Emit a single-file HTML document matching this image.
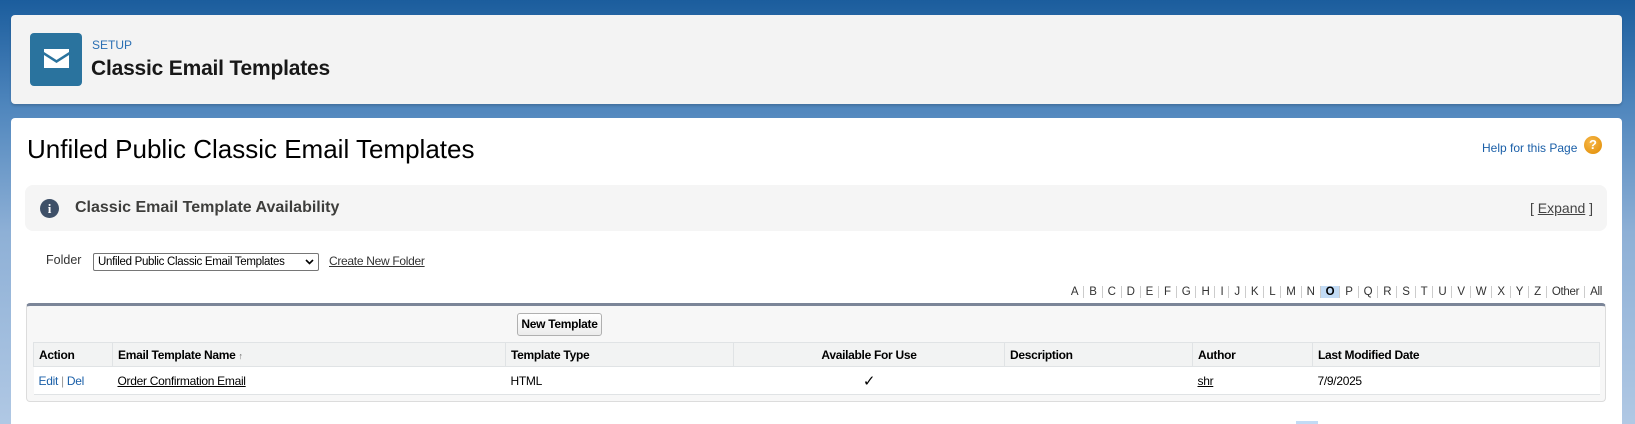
<!DOCTYPE html>
<html><head><meta charset="utf-8"><style>
*{box-sizing:border-box;margin:0;padding:0}
html,body{width:1635px;height:424px;overflow:hidden}
body{position:relative;font-family:"Liberation Sans",Arial,sans-serif}
.bg{left:0;top:0;width:1635px;height:424px;background:linear-gradient(180deg,#1b5d9d 0%,#4f86bd 25%,#8eb0d6 55%,#b0c8e4 100%)}
.abs{position:absolute}
.hdr{left:11px;top:15px;width:1611px;height:89px;background:#f3f3f3;border-radius:4px;box-shadow:0 2px 2px rgba(0,0,0,.15)}
.ico{left:30px;top:33px;width:52px;height:53px;background:#2a739e;border-radius:4px}
.main{left:11px;top:118px;width:1611px;height:320px;background:#fff;border-radius:4px 4px 0 0}
.t12{font-size:12px;letter-spacing:-0.3px;color:#000}
.alpha span{display:inline-block;padding:0 5px;border-left:1px solid #ccc;line-height:12px;font-size:11.5px;color:#333;letter-spacing:-0.3px}
.alpha span:first-child{border-left:none}
table{border-collapse:collapse;font-size:12px;letter-spacing:-0.3px}
th{text-align:left;font-weight:bold;background:#f2f3f3;border:1px solid #e0e3e5;height:24px;padding:0 5px;color:#000}
td{height:28px;border-bottom:1px solid #e0e3e5;padding:0 5px;background:#fff}
u{text-decoration:underline}
</style></head><body>
<div class="abs bg"></div>
<div class="abs hdr"></div>
<div class="abs ico"><svg class="abs" style="left:14px;top:16px" width="25" height="19" viewBox="0 0 25 19"><path d="M0 0H25V3L12.5 11L0 3Z" fill="#fff"/><path d="M0 6L12.5 14L25 6V19H0Z" fill="#fff"/></svg></div>
<div class="abs" style="left:92px;top:38px;font-size:12px;color:#2a6fb3">SETUP</div>
<div class="abs" style="left:91px;top:57px;font-size:21px;font-weight:bold;color:#181818;letter-spacing:-0.2px">Classic Email Templates</div>
<div class="abs main"></div>
<div class="abs" style="left:27px;top:134px;font-size:26px;color:#000">Unfiled Public Classic Email Templates</div>
<div class="abs" style="left:1482px;top:141px;font-size:12px;color:#1a5fa8">Help for this Page</div>
<div class="abs" style="left:1584px;top:136px;width:18px;height:18px;border-radius:50%;background:radial-gradient(circle at 40% 35%,#f7b84a,#e08a00);color:#fff;font-size:13px;font-weight:bold;text-align:center;line-height:18px">?</div>
<div class="abs" style="left:25px;top:185px;width:1582px;height:46px;background:#f5f5f5;border-radius:8px"></div>
<div class="abs" style="left:40px;top:199px;width:19px;height:19px;border-radius:50%;background:#3e5068;color:#fff;font-size:13px;font-weight:bold;text-align:center;line-height:19px;font-family:'Liberation Serif',serif">i</div>
<div class="abs" style="left:75px;top:199px;font-size:16px;font-weight:bold;color:#3e3e3c">Classic Email Template Availability</div>
<div class="abs" style="left:1530px;top:200px;font-size:14px;color:#444">[ <u>Expand</u> ]</div>
<div class="abs" style="left:46px;top:253px;font-size:12.5px;color:#333">Folder</div>
<div class="abs" style="left:93px;top:253px;width:226px;height:18px;border:1px solid #767676;border-radius:2px;font-size:11.5px;letter-spacing:-0.3px;padding:2px 4px;background:#fff">Unfiled Public Classic Email Templates <svg style="position:absolute;right:4px;top:5px" width="9" height="6" viewBox="0 0 9 6"><path d="M1 1L4.5 4.5L8 1" stroke="#000" stroke-width="1.6" fill="none"/></svg></div>
<div class="abs t12" style="left:329px;top:254px;color:#333"><u>Create New Folder</u></div>
<div class="abs alpha" style="right:28px;top:282px;white-space:nowrap"><span>A</span><span>B</span><span>C</span><span>D</span><span>E</span><span>F</span><span>G</span><span>H</span><span>I</span><span>J</span><span>K</span><span>L</span><span>M</span><span>N</span><span style="background:#c2dbf5;font-weight:bold;color:#000">O</span><span>P</span><span>Q</span><span>R</span><span>S</span><span>T</span><span>U</span><span>V</span><span>W</span><span>X</span><span>Y</span><span>Z</span><span>Other</span><span>All</span></div>
<div class="abs" style="left:26px;top:303px;width:1580px;height:99px;background:#f7f7f7;border:1px solid #dcdcdc;border-top:3px solid #7b8598;border-radius:4px"></div>
<div class="abs" style="left:517px;top:313px;width:85px;height:23px;border:1px solid #b0b0b0;border-radius:3px;background:linear-gradient(#fff,#ececec);font-size:12px;font-weight:bold;letter-spacing:-0.3px;text-align:center;line-height:21px">New Template</div>
<table class="abs" style="left:33px;top:342px;width:1567px">
<tr><th style="width:79px">Action</th><th style="width:393px">Email Template Name <span style="font-size:9px;color:#666">&#8593;</span></th><th style="width:228px">Template Type</th><th style="width:271px;text-align:center">Available For Use</th><th style="width:188px">Description</th><th style="width:120px">Author</th><th>Last Modified Date</th></tr>
<tr><td style="color:#1a5fa8">Edit <span style="color:#999">|</span> Del</td><td><u>Order Confirmation Email</u></td><td>HTML</td><td style="text-align:center;font-size:15px">&#10003;</td><td></td><td><u>shr</u></td><td>7/9/2025</td></tr>
</table>
<div class="abs" style="left:1296px;top:421px;width:22px;height:3px;background:#c2dbf5"></div>
</body></html>
